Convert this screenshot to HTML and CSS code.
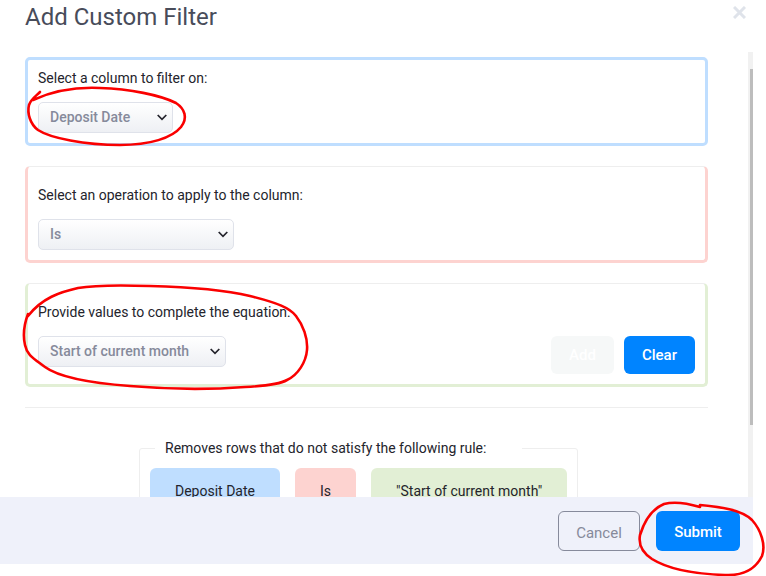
FILE: index.html
```html
<!DOCTYPE html>
<html lang="en">
<head>
<meta charset="utf-8">
<title>Add Custom Filter</title>
<link rel="stylesheet" href="styles.css">
</head>
<body>
<div class="screen">
  <div class="modal">
    <header class="modal-header">
      <h1 class="modal-title">Add Custom Filter</h1>
      <svg class="close-icon" width="13" height="13" viewBox="0 0 13 13"><path d="M1 1 12 12M12 1 1 12"/></svg>
    </header>
    <div class="modal-middle">
      <div class="modal-content">
        <section class="card card-blue">
          <div class="card-label">Select a column to filter on:</div>
          <div class="select select-column"><span>Deposit Date</span><svg class="chevron" width="10" height="7" viewBox="0 0 10 7"><path d="M.7 1 5 5.4 9.3 1"/></svg></div>
        </section>
        <section class="card card-red">
          <div class="card-label">Select an operation to apply to the column:</div>
          <div class="select select-operation"><span>Is</span><svg class="chevron" width="10" height="7" viewBox="0 0 10 7"><path d="M.7 1 5 5.4 9.3 1"/></svg></div>
        </section>
        <section class="card card-green">
          <div class="card-label">Provide values to complete the equation:</div>
          <div class="value-row">
            <div class="select select-value"><span>Start of current month</span><svg class="chevron" width="10" height="7" viewBox="0 0 10 7"><path d="M.7 1 5 5.4 9.3 1"/></svg></div>
            <div class="value-actions">
              <button class="btn btn-disabled" type="button">Add</button>
              <button class="btn btn-primary btn-clear" type="button">Clear</button>
            </div>
          </div>
        </section>
        <hr class="divider">
        <fieldset class="rule">
          <legend class="rule-legend">Removes rows that do not satisfy the following rule:</legend>
          <div class="pills">
            <div class="pill pill-blue">Deposit Date</div>
            <div class="pill pill-red">Is</div>
            <div class="pill pill-green">"Start of current month"</div>
          </div>
        </fieldset>
      </div>
      <div class="scrollbar"><div class="scrollbar-thumb"></div></div>
    </div>
    <footer class="modal-footer">
      <button class="btn btn-cancel" type="button">Cancel</button>
      <button class="btn btn-primary btn-submit" type="button">Submit</button>
    </footer>
  </div>
  <svg class="scribbles" width="766" height="576" viewBox="0 0 766 576">
    <path d="M40 92C36 96 31 99 29 105C27 113 30 124 38 130C50 138 85 145 120 145C150 145 172 138 181 127C188 118 185 109 176 103C160 95 130 89 100 88C78 87 55 90 33 100"/>
    <path d="M28 314C25 322 22 332 25 345C27 355 33 358 45 367C60 378 90 383 130 386C165 389 205 390 245 387C265 386 280 384 287 380C298 375 306 362 307 350C308 338 303 325 296 316C290 308 278 303 250 296C225 290 190 287 150 286C120 285 95 285 78 288C60 292 42 298 28 316"/>
    <path d="M700 507C690 504 675 501 664 504C652 509 644 522 640 535C638 546 643 553 652 559C668 569 695 574 725 575C745 576 756 568 762 556C766 545 761 530 752 520C742 510 722 507 700 505"/>
  </svg>
</div>
</body>
</html>
```
FILE: styles.css
```css
* {
  box-sizing: border-box;
}

html,
body {
  margin: 0;
  padding: 0;
  background: #ffffff;
}

.screen {
  position: relative;
  width: 766px;
  height: 576px;
  overflow: hidden;
  font-family: Roboto, "Liberation Sans", sans-serif;
  font-size: 14px;
  color: #24242c;
}

.modal {
  display: flex;
  flex-direction: column;
  width: 753px;
  height: 564px;
  background: #ffffff;
}

.modal-header {
  display: flex;
  justify-content: space-between;
  align-items: flex-start;
  flex: 0 0 52px;
  padding: 5px 8px 0 25px;
}

.modal-title {
  margin: 0;
  font-size: 24px;
  font-weight: 400;
  line-height: 24px;
  color: #484c5a;
}

.close-icon {
  margin-top: 1px;
  margin-right: -1px;
  fill: none;
  stroke: #dfe3ea;
  stroke-width: 3;
}

.modal-middle {
  display: flex;
  flex: 1 1 0;
  min-height: 0;
  overflow: hidden;
}

.modal-content {
  flex: 1 1 0;
  padding: 5px 40px 0 25px;
}

.scrollbar {
  flex: 0 0 5px;
  padding: 17px 0 0 2px;
  background: #f1f1f1;
}

.scrollbar-thumb {
  height: 356px;
  background: #bdbdbd;
}

.card {
  margin-bottom: 20px;
  padding: 20px 10px 10px;
  border: 3px solid;
  border-top: 1px solid #eeeeee;
  border-radius: 5px;
}

.card-blue {
  padding-top: 10px;
  border-color: #bfdeff;
  border-top: 3px solid #bfdeff;
}

.card-red {
  border-left-color: #fdd3d0;
  border-right-color: #fdd3d0;
  border-bottom-color: #fdd3d0;
}

.card-green {
  margin-bottom: 0;
  border-left-color: #e2efd5;
  border-right-color: #e2efd5;
  border-bottom-color: #e2efd5;
}

.card-label {
  margin-bottom: 16px;
  line-height: 16px;
  color: #24242c;
}

.select {
  display: flex;
  justify-content: space-between;
  align-items: center;
  height: 31px;
  padding: 0 5px 1px 11px;
  border: 1px solid #dfe2ea;
  border-radius: 5px;
  background: linear-gradient(#ffffff, #eef0f4);
  font-weight: 500;
  color: #868a9b;
}

.select-column {
  width: 135px;
}

.select-operation {
  width: 196px;
}

.select-value {
  width: 188px;
}

.chevron {
  fill: none;
  stroke: #24242c;
  stroke-width: 1.7;
}

.value-row {
  display: flex;
  justify-content: space-between;
  align-items: flex-start;
}

.value-actions {
  display: flex;
  gap: 10px;
}

.btn {
  height: 38px;
  border: 0;
  border-radius: 6px;
  font-family: inherit;
  font-size: 15px;
  font-weight: 500;
}

.btn-disabled {
  width: 63px;
  background: #f6f8f8;
  color: #ffffff;
}

.btn-primary {
  background: #0084ff;
  color: #ffffff;
}

.btn-clear {
  width: 71px;
}

.divider {
  margin: 20px 0 32px;
  border: 0;
  border-top: 1px solid #eeeeee;
}

.rule {
  width: 438px;
  margin: 0 0 0 114px;
  padding: 12px 10px 0;
  border: 1px solid #eeeeee;
  border-radius: 3px;
}

.rule-legend {
  width: 367px;
  margin-left: 5px;
  padding: 0 10px;
  line-height: 16px;
  color: #24242c;
}

.pills {
  display: flex;
  gap: 15px;
}

.pill {
  padding: 15px 25px;
  border-radius: 6px;
  line-height: 16px;
  white-space: nowrap;
}

.pill-blue {
  background: #bfdeff;
}

.pill-red {
  background: #fdd3d0;
}

.pill-green {
  background: #e2efd5;
}

.modal-footer {
  display: flex;
  justify-content: flex-end;
  align-items: center;
  flex: 0 0 67px;
  gap: 16px;
  padding: 0 13px 0 0;
  background: #eff1fa;
}

.btn-cancel {
  width: 82px;
  height: 40px;
  padding-top: 5px;
  border: 1px solid #868a9b;
  background: transparent;
  font-weight: 400;
  color: #868a9b;
}

.btn-submit {
  width: 84px;
  height: 40px;
  padding-top: 4px;
}

.scribbles {
  position: absolute;
  top: 0;
  left: 0;
  pointer-events: none;
  fill: none;
  stroke: #fa0000;
  stroke-width: 2.6;
  stroke-linecap: round;
}
```
